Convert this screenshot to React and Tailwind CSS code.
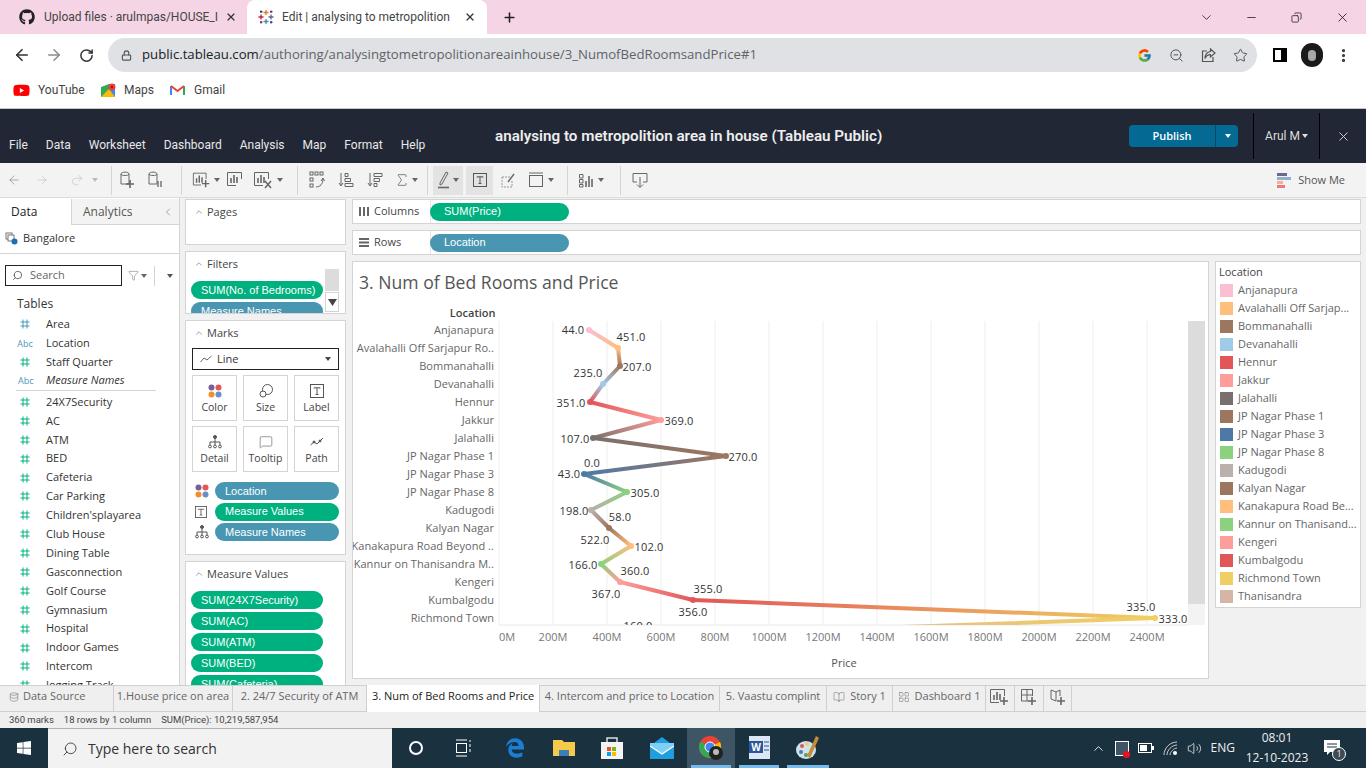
import React from 'react';
import { ArrowLeft, ArrowRight, RotateCw, Lock, ZoomOut, Star, MoreVertical, X, Plus, ChevronDown, ChevronUp, ChevronLeft, Minus, Search, Copy, Volume2, Sigma, Redo2, Filter, Database, MessageSquare, BookOpen, LayoutGrid } from 'lucide-react';
import { FaGithub, FaYoutube, FaWindows, FaEdgeLegacy } from 'react-icons/fa';
import { FcGoogle } from 'react-icons/fc';

const FIELDS = [
  ['#', 'Area', '#4b9ab5'], ['Abc', 'Location', '#4b9ab5'], ['#', 'Staff Quarter', '#00b180'], ['Abc', 'Measure Names', '#4b9ab5'],
  ['#', '24X7Security'], ['#', 'AC'], ['#', 'ATM'], ['#', 'BED'], ['#', 'Cafeteria'], ['#', 'Car Parking'], ['#', "Children'splayarea"],
  ['#', 'Club House'], ['#', 'Dining Table'], ['#', 'Gasconnection'], ['#', 'Golf Course'], ['#', 'Gymnasium'], ['#', 'Hospital'],
  ['#', 'Indoor Games'], ['#', 'Intercom'], ['#', 'Jogging Track'],
];

const POINTS = [
  ['Anjanapura', 589, '#fabfd2'], ['Avalahalli Off Sarjapur Ro..', 618, '#ffbe7d'], ['Bommanahalli', 620, '#9d7660'], ['Devanahalli', 603, '#a0cbe8'],
  ['Hennur', 590, '#e15759'], ['Jakkur', 661, '#ff9d9a'], ['Jalahalli', 593, '#79706e'], ['JP Nagar Phase 1', 726, '#9d7660'],
  ['JP Nagar Phase 3', 584, '#4e79a7'], ['JP Nagar Phase 8', 627, '#8cd17d'], ['Kadugodi', 591, '#bab0ac'], ['Kalyan Nagar', 609, '#9d7660'],
  ['Kanakapura Road Beyond ..', 631, '#ffbe7d'], ['Kannur on Thanisandra M..', 601, '#8cd17d'], ['Kengeri', 620, '#ff9d9a'], ['Kumbalgodu', 693, '#e15759'],
  ['Richmond Town', 1155, '#f1ce63'], ['Thanisandra', 650, '#d7b5a6'],
];

const LEGEND = [
  ['Anjanapura', '#fabfd2'], ['Avalahalli Off Sarjap...', '#ffbe7d'], ['Bommanahalli', '#9d7660'], ['Devanahalli', '#a0cbe8'], ['Hennur', '#e15759'],
  ['Jakkur', '#ff9d9a'], ['Jalahalli', '#79706e'], ['JP Nagar Phase 1', '#9d7660'], ['JP Nagar Phase 3', '#4e79a7'], ['JP Nagar Phase 8', '#8cd17d'],
  ['Kadugodi', '#bab0ac'], ['Kalyan Nagar', '#9d7660'], ['Kanakapura Road Be...', '#ffbe7d'], ['Kannur on Thanisand...', '#8cd17d'], ['Kengeri', '#ff9d9a'],
  ['Kumbalgodu', '#e15759'], ['Richmond Town', '#f1ce63'], ['Thanisandra', '#d7b5a6'],
];

const LABELS = [
  ['44.0', 573, 330], ['451.0', 631, 337], ['207.0', 637, 367], ['235.0', 588, 373], ['351.0', 571, 403], ['369.0', 679, 421], ['107.0', 575, 439],
  ['270.0', 743, 457], ['0.0', 592, 463], ['43.0', 569, 474], ['305.0', 645, 493], ['198.0', 574, 511], ['58.0', 620, 517], ['522.0', 595, 540],
  ['102.0', 649, 547], ['166.0', 583, 565], ['360.0', 635, 571], ['367.0', 606, 594], ['355.0', 708, 589], ['356.0', 693, 612], ['160.0', 638, 626],
  ['335.0', 1141, 607], ['333.0', 1173, 619],
];

const Hash = ({ color = '#00b180' }) => (
  <svg width="10" height="10" viewBox="0 0 10 10" stroke={color} strokeWidth="1" fill="none">
    <path d="M3 0.5V9.5M7 0.5V9.5M0.5 3H9.5M0.5 7H9.5" />
  </svg>
);

const TreeIcon = () => (
  <svg width="14" height="14" viewBox="0 0 14 14" fill="none" stroke="#555" strokeWidth="1">
    <circle cx="7" cy="2" r="1.5" fill="#555" /><path d="M7 4V7M2 10V7H12V10M7 7V10" /><circle cx="2" cy="11.5" r="1.4" /><circle cx="7" cy="11.5" r="1.4" /><circle cx="12" cy="11.5" r="1.4" />
  </svg>
);

const TextBox = ({ size = 14 }) => (
  <svg width={size} height={size} viewBox="0 0 14 14" fill="none" stroke="#555" strokeWidth="1">
    <rect x="0.5" y="0.5" width="13" height="13" /><path d="M4 4.5V3.8H10V4.5M7 3.8V10.5M5.5 10.5H8.5" />
  </svg>
);

const Dots = () => (
  <svg width="14" height="14" viewBox="0 0 14 14">
    <circle cx="3.5" cy="3.5" r="3" fill="#7a5f96" /><circle cx="10.5" cy="3.5" r="3" fill="#e15759" /><circle cx="3.5" cy="10.5" r="3" fill="#f28e2b" /><circle cx="10.5" cy="10.5" r="3" fill="#6b8fc4" />
  </svg>
);

const BarsIcon = ({ plus, cross }) => (
  <svg width="22" height="20" viewBox="0 0 22 20" fill="none" stroke="#666" strokeWidth="1">
    <path d="M1.5 15.5V2.5H15.5V9" /><path d="M1.5 15.5H10" /><path d="M5 13V8M8 13V5M11 13V7" strokeWidth="1.6" />
    {plus && <path d="M15 10V18M11 14H19" strokeWidth="1.6" />}
    {cross && <path d="M12 11L18 18M18 11L12 18" strokeWidth="1.5" />}
  </svg>
);

const DataIcon = ({ mark }) => (
  <svg width="18" height="20" viewBox="0 0 18 20" fill="none" stroke="#666" strokeWidth="1">
    <path d="M2 4C2 1.5 10 1.5 10 4V14H2Z" /><path d="M2 4C2 6 10 6 10 4" />
    {mark === 'plus' ? <path d="M11 10V18M7 14H15" strokeWidth="1.6" /> : <path d="M11 11V17M14 11V17" strokeWidth="1.3" />}
  </svg>
);

const SortIcon = ({ flip }) => (
  <svg width="16" height="18" viewBox="0 0 16 18" fill="none" stroke="#666" strokeWidth="1">
    <path d="M3 2V14M1 12L3 15L5 12" />
    {flip ? <path d="M7 2.5H15V5.5H7ZM7 7.5H12.5V10.5H7ZM7 12.5H10V15.5H7Z" /> : <path d="M7 2.5H10V5.5H7ZM7 7.5H12.5V10.5H7ZM7 12.5H15V15.5H7Z" />}
  </svg>
);

const Caret = ({ color = '#666' }) => (
  <svg width="6" height="4" viewBox="0 0 6 4" className="ml-[2px] shrink-0"><path d="M0 0H6L3 4Z" fill={color} /></svg>
);

const Divider = () => <div className="w-px h-[29px] bg-[#d5d5d5]" />;

const ToolBtn = ({ w, active, children }) => (
  <div style={{ width: w }} className={`h-[29px] flex items-center justify-center shrink-0 ${active ? 'bg-[#e3e3e3]' : ''}`}>{children}</div>
);

const Pill = ({ green, w, className = '', children }) => (
  <div style={{ width: w }} className={`h-[18px] rounded-full shrink-0 pl-[10px] flex items-center font-['Liberation_Sans',sans-serif] text-[11px] leading-none text-white whitespace-nowrap overflow-hidden ${green ? 'bg-[#00b180]' : 'bg-[#4996b2]'} ${className}`}>{children}</div>
);

const CardTitle = ({ children }) => (
  <div className="flex items-center h-[24px] pl-[8px] text-[11px] text-[#444]">
    <ChevronUp size={10} strokeWidth={1.5} className="mr-[3px] text-[#666]" />{children}
  </div>
);

const MarkBtn = ({ label, children }) => (
  <div className="w-[45px] h-[46px] border border-[#d4d4d4] flex flex-col items-center pt-[7px] text-[10.5px] text-[#444]">
    <div className="h-[15px] flex items-center">{children}</div>
    <div className="mt-[4px] leading-none">{label}</div>
  </div>
);

const SheetTab = ({ w, active, children }) => (
  <div style={{ width: w }} className={`h-[27px] pb-[4px] shrink-0 flex items-center justify-center gap-[5px] border-r border-[#cfcfcf] text-[11px] whitespace-nowrap ${active ? 'bg-white text-[#222] font-medium' : 'text-[#666]'}`}>{children}</div>
);

const TaskSlot = ({ w = 48, open, active, children }) => (
  <div style={{ width: w }} className={`relative h-[40px] flex items-center justify-center shrink-0 ${active ? 'bg-[#3d5564]' : ''}`}>
    {children}
    {open && <div className="absolute bottom-0 left-[4px] right-[4px] h-[3px] bg-[#76b9ed]" />}
  </div>
);

function Chart() {
  const y = i => 330 + i * 18;
  return (
    <svg width="857" height="418" viewBox="352 261 857 418" className="block">
      <defs>
        <clipPath id="plot"><rect x="499" y="321" width="689" height="304" /></clipPath>
        {POINTS.slice(1).map((p, i) => (
          <linearGradient key={i} id={`seg${i}`} gradientUnits="userSpaceOnUse" x1={POINTS[i][1]} y1={y(i)} x2={p[1]} y2={y(i + 1)}>
            <stop offset="0" stopColor={POINTS[i][2]} /><stop offset="1" stopColor={p[2]} />
          </linearGradient>
        ))}
      </defs>
      <text x="359" y="289" fontSize="17.6" fill="#555">3. Num of Bed Rooms and Price</text>
      <text x="495.5" y="317" fontSize="11" fontWeight="600" fill="#444" textAnchor="end">Location</text>
      {POINTS.map((p, i) => i < 17 && (
        <text key={p[0]} x="494" y={y(i) + 3.5} fontSize="11" fill="#666" textAnchor="end" letterSpacing="0.05">{p[0]}</text>
      ))}
      {Array.from({ length: 13 }, (_, i) => (
        <g key={i}>
          <line x1={499 + i * 54} x2={499 + i * 54} y1="321" y2="625" stroke="#eeeeee" />
          <text x={i === 0 ? 507 : 499 + i * 54} y="641" fontSize="11" fill="#777" textAnchor="middle">{i * 200}M</text>
        </g>
      ))}
      <line x1="499" x2="1188" y1="625" y2="625" stroke="#e8e8e8" />
      <rect x="1188" y="321" width="17" height="283" fill="#dcdcdc" />
      <rect x="1188" y="604" width="17" height="21" fill="#f3f3f3" />
      <g clipPath="url(#plot)">
        {POINTS.slice(1).map((p, i) => (
          <line key={i} x1={POINTS[i][1]} y1={y(i)} x2={p[1]} y2={y(i + 1)} stroke={`url(#seg${i})`} strokeWidth="4" strokeLinecap="round" />
        ))}
        {POINTS.map((p, i) => <circle key={i} cx={p[1]} cy={y(i)} r="3" fill={p[2]} />)}
        {LABELS.map(l => <text key={l[0] + l[1]} x={l[1]} y={l[2] + 3.5} fontSize="11" fill="#333" textAnchor="middle" letterSpacing="0.2">{l[0]}</text>)}
      </g>
      <text x="844" y="667" fontSize="11" fontWeight="500" fill="#555" textAnchor="middle">Price</text>
    </svg>
  );
}

export default function App() {
  return (
    <div className="w-[1366px] h-[768px] overflow-hidden flex flex-col bg-white font-['Open_Sans',sans-serif]">
      {/* browser tab strip */}
      <div className="h-[34px] shrink-0 bg-[#f5d5e5] flex items-center text-[12px] text-[#444] font-['Roboto',sans-serif]">
        <div className="w-[247px] flex items-center pl-[19px] pr-[10px]">
          <FaGithub size={16} className="text-[#222] shrink-0" />
          <span className="ml-[9px] whitespace-nowrap">Upload files · arulmpas/HOUSE_I</span>
          <X size={12} strokeWidth={2.5} className="ml-auto text-[#333]" />
        </div>
        <div className="w-[240px] h-[34px] bg-white rounded-t-lg flex items-center pl-[11px] pr-[10px]">
          <svg width="16" height="16" viewBox="0 0 16 16" strokeWidth="1.3" fill="none" className="shrink-0">
            <path d="M8 1V6M5.5 3.5H10.5" stroke="#e8762d" /><path d="M8 10V15M5.5 12.5H10.5" stroke="#59879b" /><path d="M3 5.5V10.5M0.5 8H5.5" stroke="#c72037" /><path d="M13 5.5V10.5M10.5 8H15.5" stroke="#5b6591" /><path d="M3 1.5V4M2 2.7H4.5M13 12V14.5M12 13.2H14.5" stroke="#1f447e" /><path d="M13 1.5V4M12 2.7H14.5M3 12V14.5M2 13.2H4.5" stroke="#7b2d5f" />
          </svg>
          <span className="ml-[8px] whitespace-nowrap">Edit | analysing to metropolition</span>
          <X size={12} strokeWidth={2.5} className="ml-auto mr-[1px] text-[#333]" />
        </div>
        <Plus size={15} strokeWidth={2.5} className="ml-[15px] text-[#222]" />
        <div className="ml-auto flex items-center text-[#222]">
          <ChevronDown size={15} strokeWidth={1.3} className="mr-[31px]" />
          <Minus size={13} strokeWidth={1.5} className="mr-[33px]" />
          <Copy size={11} strokeWidth={1.7} className="mr-[33px] -scale-x-100" />
          <X size={15} strokeWidth={1.4} className="mr-[16px]" />
        </div>
      </div>
      {/* address bar */}
      <div className="h-[38px] pt-[4px] shrink-0 flex items-center">
        <ArrowLeft size={18} strokeWidth={2.2} className="ml-[13px] text-[#333]" />
        <ArrowRight size={18} strokeWidth={2} className="ml-[14px] text-[#8c8c8c]" />
        <RotateCw size={15} strokeWidth={2.4} className="ml-[16px] text-[#333]" />
        <div className="ml-[14px] w-[1149px] h-[34px] shrink-0 rounded-full bg-[#dfe1e5] flex items-center pl-[13px]">
          <Lock size={11} strokeWidth={2.5} className="text-[#555]" />
          <span className="ml-[10px] text-[13.2px] text-[#202124] whitespace-nowrap">public.tableau.com<span className="text-[#5f6368]">/authoring/analysingtometropolitionareainhouse/3_NumofBedRoomsandPrice#1</span></span>
          <div className="ml-auto flex items-center mr-[9px] gap-[17px] text-[#555]">
            <FcGoogle size={15} />
            <ZoomOut size={15} strokeWidth={1.6} />
            <svg width="15" height="15" viewBox="0 0 15 15" fill="none" stroke="#555" strokeWidth="1.2"><path d="M6 3H1.5V13.5H12V9" /><path d="M9.5 1L14 5L9.5 9V6.7C7 6.7 5.2 7.7 4 10.5C4 6.7 6 4 9.5 3.5Z" /></svg>
            <Star size={15} strokeWidth={1.6} />
          </div>
        </div>
        <div className="ml-[16px] w-[14px] h-[14px] border-2 border-black border-r-[6px] shrink-0" />
        <div className="ml-[14px] w-[22px] h-[24px] rounded-full bg-[#1a1a1a] flex items-center justify-center shrink-0"><div className="w-[8px] h-[11px] rounded-full bg-[#a8a8a8]" /></div>
        <MoreVertical size={17} strokeWidth={2.5} className="ml-[12px] shrink-0 text-[#333]" />
      </div>
      {/* bookmarks */}
      <div className="h-[36px] shrink-0 border-b border-[#c8c8c8] box-content flex items-center text-[12px] text-[#444] pl-[13px] font-['Roboto',sans-serif]">
        <FaYoutube size={17} className="text-[#f00] shrink-0" />
        <span className="ml-[8px] w-[46px]">YouTube</span>
        <svg width="15" height="15" viewBox="0 0 15 15" className="ml-[17px] shrink-0">
          <path d="M0 4L8 1V14L0 14Z" fill="#34a853" /><path d="M8 1H14V14H8Z" fill="#4285f4" /><path d="M0 14L8 6L14 14Z" fill="#fbbc04" /><circle cx="11" cy="4" r="3.5" fill="#ea4335" /><circle cx="11" cy="4" r="1.2" fill="#a50e0e" />
        </svg>
        <span className="ml-[8px] w-[29px]">Maps</span>
        <svg width="15" height="12" viewBox="0 0 15 12" className="ml-[17px] shrink-0" fill="none">
          <path d="M1 11V2" stroke="#4285f4" strokeWidth="2" /><path d="M14 11V2" stroke="#34a853" strokeWidth="2" /><path d="M1 2L7.5 7L14 2" stroke="#ea4335" strokeWidth="2" />
        </svg>
        <span className="ml-[9px]">Gmail</span>
      </div>
      {/* tableau header */}
      <div className="h-[54px] shrink-0 bg-[#222736] relative flex items-end text-white">
        <div className="flex gap-[18px] pl-[9px] pb-[9px] text-[12px] text-[#e8e8e8] font-['Roboto',sans-serif]">
          {['File', 'Data', 'Worksheet', 'Dashboard', 'Analysis', 'Map', 'Format', 'Help'].map(m => <span key={m}>{m}</span>)}
        </div>
        <div className="absolute left-[495px] top-[18px] text-[15.2px] leading-[18px] font-semibold font-['Roboto',sans-serif] whitespace-nowrap text-[#eee]">analysing to metropolition area in house (Tableau Public)</div>
        <div className="ml-auto mr-[15px] self-stretch flex items-center">
          <div className="w-[109px] h-[22px] rounded-sm bg-[#046a93] flex items-center text-[11px] font-semibold">
            <span className="w-[87px] text-center border-r border-[#02496a] leading-[22px]">Publish</span>
            <span className="flex-1 flex justify-center"><Caret color="#fff" /></span>
          </div>
          <div className="ml-[15px] w-px h-[46px] bg-black" />
          <div className="w-[65px] flex items-center justify-center text-[12px] text-[#ddd] font-['Roboto',sans-serif]">Arul M<Caret color="#ddd" /></div>
          <div className="w-px h-[46px] bg-black" />
          <X size={15} strokeWidth={1.6} className="ml-[16px] text-[#ccc]" />
        </div>
      </div>
      {/* toolbar */}
      <div className="h-[35px] shrink-0 bg-[#f3f3f3] border-b border-[#dcdcdc] flex items-center">
        <ToolBtn w={27}><ArrowLeft size={14} strokeWidth={1} className="text-[#777]" /></ToolBtn>
        <ToolBtn w={30}><ArrowRight size={14} strokeWidth={1} className="text-[#bbb]" /></ToolBtn>
        <ToolBtn w={54}><Redo2 size={14} strokeWidth={1} className="text-[#bbb]" /><span className="ml-[6px]"><Caret color="#bbb" /></span></ToolBtn>
        <Divider />
        <ToolBtn w={32}><DataIcon mark="plus" /></ToolBtn>
        <ToolBtn w={24}><DataIcon /></ToolBtn>
        <div className="w-[13px]" /><Divider />
        <div className="w-[10px]" />
        <ToolBtn w={28}><BarsIcon plus /><Caret /></ToolBtn>
        <ToolBtn w={33}><BarsIcon /></ToolBtn>
        <ToolBtn w={30}><BarsIcon cross /><Caret /></ToolBtn>
        <div className="w-[14px]" /><Divider />
        <div className="w-[5px]" />
        <ToolBtn w={28}><svg width="16" height="18" viewBox="0 0 16 18" fill="none" stroke="#666"><rect x="1" y="1" width="3" height="3" /><rect x="6" y="1" width="3" height="3" /><rect x="11" y="1" width="3" height="3" /><rect x="1" y="7" width="3" height="3" /><rect x="1" y="13" width="3" height="3" /><path d="M7 16C11 16 14 13 14 8M12 10L14 7L15.5 10" /></svg></ToolBtn>
        <ToolBtn w={29}><SortIcon /></ToolBtn>
        <ToolBtn w={29}><SortIcon flip /></ToolBtn>
        <ToolBtn w={33}><Sigma size={16} strokeWidth={1.2} className="text-[#666]" /><Caret /></ToolBtn>
        <div className="w-[5px]" /><Divider />
        <div className="w-[5px]" />
        <ToolBtn w={30} active><svg width="14" height="18" viewBox="0 0 14 18" fill="none" stroke="#666"><path d="M3 12L9 1L11 2L5 13L3 14Z" /><path d="M1 16.5H12" strokeWidth="1.6" /></svg><Caret /></ToolBtn>
        <div className="w-[3px]" />
        <ToolBtn w={27} active><TextBox /></ToolBtn>
        <ToolBtn w={30}><svg width="15" height="15" viewBox="0 0 15 15" fill="none" stroke="#999"><path d="M1 4H9M1 4V14H11V8" strokeDasharray="2 1" /><path d="M7 9L13 1" stroke="#666" strokeWidth="1.4" /></svg></ToolBtn>
        <ToolBtn w={36}><svg width="18" height="16" viewBox="0 0 18 16" fill="none" stroke="#666"><rect x="1.5" y="3.5" width="13" height="11" /><path d="M1 1H15" /></svg><Caret /></ToolBtn>
        <div className="w-[8px]" /><Divider />
        <ToolBtn w={45}><svg width="18" height="16" viewBox="0 0 18 16" fill="none" stroke="#666"><path d="M1.5 2.5H5V6H1.5ZM1.5 7.5H5V11H1.5ZM1.5 12.5H5V15H1.5Z" /><path d="M8 15V9M11 15V4M14 15V7" strokeWidth="1.6" /></svg><Caret /></ToolBtn>
        <div className="w-[7px]" /><Divider />
        <ToolBtn w={37}><svg width="16" height="17" viewBox="0 0 16 17" fill="none" stroke="#666"><path d="M5 10H1V1.5H15V10H11" /><path d="M8 5V15M5 12.5L8 15.5L11 12.5" /></svg></ToolBtn>
        <div className="ml-auto mr-[21px] flex items-center text-[11px] text-[#555]">
          <svg width="14" height="16" viewBox="0 0 14 16" className="mr-[7px]"><rect x="0" y="1" width="10" height="3" fill="#6a6a8e" /><rect x="0" y="5" width="14" height="3" fill="#8fb0cf" /><rect x="0" y="9" width="6" height="3" fill="#f2b38b" /><rect x="0" y="13" width="8" height="3" fill="#e8798a" /></svg>
          Show Me
        </div>
      </div>
      {/* workspace */}
      <div className="flex-1 min-h-0 flex bg-[#f1f1f1]">
        {/* data pane */}
        <div className="w-[180px] shrink-0 bg-white border-r border-[#d4d4d4] flex flex-col overflow-hidden">
          <div className="h-[26px] mt-[1px] shrink-0 flex items-center text-[12px]">
            <div className="w-[72px] h-full flex items-center pl-[11px] text-[#222] border-r border-[#d4d4d4]">Data</div>
            <div className="flex-1 h-full flex items-center pl-[11px] pr-[5px] text-[#555] bg-[#f3f3f3] border-b border-[#d4d4d4]">Analytics<ChevronLeft size={12} strokeWidth={1} className="ml-auto" /></div>
          </div>
          <div className="h-[29px] shrink-0 flex items-center pb-[1px] pl-[5px] border-b border-[#d4d4d4] text-[11px] text-[#333]">
            <svg width="13" height="13" viewBox="0 0 13 13" fill="none" className="mr-[5px]"><rect x="1" y="1" width="6" height="6" stroke="#777" /><rect x="3" y="3" width="6" height="6" stroke="#777" fill="#fff" /><circle cx="9.5" cy="9.5" r="3" fill="#1f6fb0" /></svg>
            Bangalore
          </div>
          <div className="mt-[11px] shrink-0 flex items-center pl-[5px]">
            <div className="w-[117px] h-[21px] border border-[#222] flex items-center pl-[6px] text-[11px] text-[#666]"><Search size={11} strokeWidth={1.5} className="-scale-x-100 mr-[7px] text-[#333]" />Search</div>
            <Filter size={11} strokeWidth={1} className="ml-[6px] text-[#555]" /><Caret />
            <div className="ml-[7px] w-px h-[20px] bg-[#d4d4d4]" />
            <span className="ml-[10px]"><Caret color="#555" /></span>
          </div>
          <div className="ml-[17px] mt-[10px] shrink-0 text-[12px] leading-[16px] text-[#333]">Tables</div>
          <div className="mt-[3px] text-[11px] text-[#333]">
            {FIELDS.map((f, i) => (
              <div key={f[1]} className={`h-[18.9px] flex items-center ${i === 3 ? 'mb-[2px] border-b border-[#d4d4d4] ml-[16px] mr-[23px] pl-[2px] italic' : 'pl-[20px]'}`}>
                <span className={`not-italic flex shrink-0 ${i === 3 ? 'w-[26px] justify-start' : 'w-[10px] mr-[16px] justify-center'}`}>
                  {f[0] === '#' ? <Hash color={f[2]} /> : <span style={{ color: f[2] }} className="text-[9px]">Abc</span>}
                </span>
                <span className={i === 3 ? 'ml-[2px]' : ''}>{f[1]}</span>
              </div>
            ))}
          </div>
        </div>
        {/* cards */}
        <div className="w-[161px] ml-[5px] shrink-0 flex flex-col gap-[6px] pt-[1px] overflow-hidden">
          <div className="h-[46px] shrink-0 bg-white border border-[#d4d4d4]"><CardTitle>Pages</CardTitle></div>
          <div className="h-[63px] shrink-0 bg-white border border-[#d4d4d4] relative overflow-hidden">
            <CardTitle>Filters</CardTitle>
            <Pill green w={132} className="ml-[5px] mt-[5px] mb-[3px]">SUM(No. of Bedrooms)</Pill>
            <Pill w={132} className="ml-[5px]">Measure Names</Pill>
            <div className="absolute left-[139px] top-[17px] w-[14px] h-[22px] bg-[#dcdcdc]" />
            <div className="absolute left-[139px] top-[40px] w-[14px] h-[20px] border border-[#d4d4d4] flex items-center justify-center">
              <svg width="9" height="7" viewBox="0 0 9 7"><path d="M0 0H9L4.5 7Z" fill="#444" /></svg>
            </div>
          </div>
          <div className="h-[235px] shrink-0 bg-white border border-[#d4d4d4] px-[6px]">
            <div className="-mx-[6px]"><CardTitle>Marks</CardTitle></div>
            <div className="h-[22px] mt-[3px] border border-[#222] flex items-center pl-[7px] pr-[7px] text-[11px] text-[#333]">
              <svg width="12" height="8" viewBox="0 0 12 8" fill="none" stroke="#666" className="mr-[5px]"><path d="M0.5 7L4 3L7 5L11.5 1" /></svg>Line<span className="ml-auto"><Caret color="#444" /></span>
            </div>
            <div className="grid grid-cols-3 gap-x-[6px] gap-y-[5px] mt-[5px]">
              <MarkBtn label="Color"><Dots /></MarkBtn>
              <MarkBtn label="Size"><svg width="14" height="14" viewBox="0 0 14 14" fill="none" stroke="#555"><circle cx="8.5" cy="5.5" r="5" /><circle cx="4" cy="10" r="3" fill="#fff" /></svg></MarkBtn>
              <MarkBtn label="Label"><TextBox /></MarkBtn>
              <MarkBtn label="Detail"><TreeIcon /></MarkBtn>
              <MarkBtn label="Tooltip"><MessageSquare size={14} strokeWidth={1} className="text-[#555]" /></MarkBtn>
              <MarkBtn label="Path"><svg width="14" height="12" viewBox="0 0 14 12" fill="none" stroke="#555"><path d="M0.5 9L4 6L7 8L13 2" /><circle cx="4" cy="6" r="1" fill="#555" /><circle cx="10" cy="5" r="1" fill="#555" /></svg></MarkBtn>
            </div>
            <div className="mt-[10px] flex flex-col gap-[2.5px]">
              {[[<Dots key="d" />, 'Location', false], [<TextBox key="t" size={12} />, 'Measure Values', true], [<TreeIcon key="r" />, 'Measure Names', false]].map(r => (
                <div key={r[1]} className="flex items-center">
                  <span className="w-[23px] flex justify-start pl-[3px]">{r[0]}</span>
                  <Pill green={r[2]} w={124}>{r[1]}</Pill>
                </div>
              ))}
            </div>
          </div>
          <div className="flex-1 min-h-0 bg-white border border-[#d4d4d4] border-b-0 overflow-hidden">
            <CardTitle>Measure Values</CardTitle>
            <div className="ml-[5px] mt-[5px] flex flex-col gap-[3px]">
              {['SUM(24X7Security)', 'SUM(AC)', 'SUM(ATM)', 'SUM(BED)', 'SUM(Cafeteria)'].map(m => <Pill key={m} green w={132}>{m}</Pill>)}
            </div>
          </div>
        </div>
        {/* shelves and view */}
        <div className="flex-1 min-w-0 ml-[6px] mr-[5px] pt-[1px] flex flex-col gap-[6px]">
          {[['Columns', 'SUM(Price)', true, <svg key="c" width="10" height="9" viewBox="0 0 10 9" fill="#666"><rect x="0" y="0" width="2" height="9" /><rect x="4" y="0" width="2" height="9" /><rect x="8" y="0" width="2" height="9" /></svg>], ['Rows', 'Location', false, <svg key="r" width="10" height="9" viewBox="0 0 10 9" fill="#666"><rect x="0" y="0" width="10" height="2" /><rect x="0" y="3.5" width="10" height="2" /><rect x="0" y="7" width="10" height="2" /></svg>]].map(s => (
            <div key={s[0]} className="h-[25px] shrink-0 bg-white border border-[#d4d4d4] flex items-center">
              <div className="w-[78px] h-full pl-[6px] flex items-center gap-[5px] text-[11px] text-[#444] border-r border-[#e4e4e4]">{s[3]}{s[0]}</div>
              <Pill green={s[2]} w={139} className="ml-[-1px] pl-[14px]">{s[1]}</Pill>
            </div>
          ))}
          <div className="flex items-start gap-[6px]">
            <div className="w-[857px] h-[418px] shrink-0 bg-white border border-[#d4d4d4] box-border overflow-hidden">
              <div className="-m-px"><Chart /></div>
            </div>
            <div className="w-[146px] h-[347px] shrink-0 bg-white border border-[#d4d4d4] pl-[4px] pt-[3px]">
              <div className="text-[11px] leading-[14px] text-[#444] mb-[2px] -ml-[1px]">Location</div>
              {LEGEND.map(l => (
                <div key={l[0]} className="h-[18px] flex items-center text-[11px] text-[#666] whitespace-nowrap">
                  <span style={{ background: l[1] }} className="w-[13px] h-[13px] mr-[5px] shrink-0" />{l[0]}
                </div>
              ))}
            </div>
          </div>
        </div>
      </div>
      {/* sheet tabs */}
      <div className="h-[27px] shrink-0 bg-[#efefef] border-y border-[#cfcfcf] box-border flex items-center">
        <div className="w-[114px] flex items-center pl-[9px] pb-[4px] gap-[4px] text-[11px] text-[#666] border-r border-[#cfcfcf] h-full"><Database size={10} strokeWidth={1.2} />Data Source</div>
        <SheetTab w={119}>1.House price on area</SheetTab>
        <SheetTab w={134}>2. 24/7 Security of ATM</SheetTab>
        <SheetTab w={173} active>3. Num of Bed Rooms and Price</SheetTab>
        <SheetTab w={180}>4. Intercom and price to Location</SheetTab>
        <SheetTab w={107}>5. Vaastu complint</SheetTab>
        <SheetTab w={66}><BookOpen size={12} strokeWidth={1} />Story 1</SheetTab>
        <SheetTab w={93}><LayoutGrid size={12} strokeWidth={1} />Dashboard 1</SheetTab>
        <SheetTab w={29}><BarsIcon plus /></SheetTab>
        <SheetTab w={29}><svg width="18" height="18" viewBox="0 0 18 18" fill="none" stroke="#666"><path d="M1.5 1.5H12.5V8M1.5 1.5V13H8M7 1.5V13M1.5 7H12.5" /><path d="M12 9V17M8 13H16" strokeWidth="1.6" /></svg></SheetTab>
        <SheetTab w={28}><svg width="18" height="18" viewBox="0 0 18 18" fill="none" stroke="#666"><path d="M2 2L7 4V13L2 11ZM7 4L11 2V8" /><path d="M12 9V17M8 13H16" strokeWidth="1.6" /></svg></SheetTab>
      </div>
      {/* status bar */}
      <div className="h-[16px] shrink-0 bg-[#efefef] flex items-center pl-[9px] gap-[10px] text-[9.5px] text-[#444] font-['Roboto',sans-serif]">
        <span>360 marks</span><span>18 rows by 1 column</span><span>SUM(Price): 10,219,587,954</span>
      </div>
      {/* windows taskbar */}
      <div className="h-[40px] shrink-0 bg-[#1a3140] flex items-center text-white">
        <div className="w-[48px] flex justify-center"><FaWindows size={16} /></div>
        <div className="w-[344px] h-[40px] bg-[#f2f2f2] border-t border-[#b0b0b0] flex items-center pl-[14px] text-[14px] text-[#333] box-border">
          <Search size={16} strokeWidth={1.3} className="-scale-x-100 mr-[10px]" />Type here to search
        </div>
        <TaskSlot><div className="w-[14px] h-[14px] rounded-full border-2 border-white" /></TaskSlot>
        <TaskSlot><svg width="18" height="18" viewBox="0 0 18 18" fill="none" stroke="#fff"><path d="M1 1H12M1 17H12" /><rect x="1.5" y="4.5" width="10" height="9" /><path d="M15 1V3M15 5V8M15 10V13" /></svg></TaskSlot>
        <div className="w-[3px]" />
        <TaskSlot><FaEdgeLegacy size={20} className="text-[#1a7fd4]" /></TaskSlot>
        <TaskSlot w={49}><svg width="22" height="20" viewBox="0 0 22 20"><path d="M0 2H9L11 4H22V18H0Z" fill="#f7c94b" /><rect x="6" y="12" width="10" height="6" fill="#3c7fb8" /></svg></TaskSlot>
        <TaskSlot><svg width="22" height="24" viewBox="0 0 22 24"><rect x="0" y="6" width="22" height="17" fill="#f4f4f4" /><path d="M6 6V2H16V6" fill="none" stroke="#ddd" strokeWidth="1.5" /><rect x="6" y="11" width="4" height="4" fill="#f25022" /><rect x="11" y="11" width="4" height="4" fill="#7fba00" /><rect x="6" y="16" width="4" height="4" fill="#00a4ef" /><rect x="11" y="16" width="4" height="4" fill="#ffb900" /></svg></TaskSlot>
        <TaskSlot w={51}><svg width="24" height="24" viewBox="0 0 24 24"><path d="M12 1L24 10V23H0V10Z" fill="#1f9fe0" /><path d="M0 10L12 18L24 10V7H0Z" fill="#7dd0f5" /><path d="M0 10L12 18L24 10" fill="none" stroke="#fff" strokeWidth="1.2" /></svg></TaskSlot>
        <TaskSlot open active><svg width="26" height="26" viewBox="0 0 26 26"><circle cx="12" cy="12" r="11" fill="#ea4335" /><path d="M12 12L2.5 6.5A11 11 0 0 0 12 23Z" fill="#34a853" /><path d="M12 12L12 23A11 11 0 0 0 22 7Z" fill="#fbbc04" /><circle cx="12" cy="12" r="5" fill="#4285f4" stroke="#fff" /><circle cx="18" cy="18" r="7" fill="#222" /><circle cx="18" cy="17" r="3" fill="#bbb" /></svg></TaskSlot>
        <TaskSlot open><svg width="24" height="26" viewBox="0 0 24 26"><rect x="2" y="1" width="21" height="23" fill="#dbe7f5" /><rect x="2" y="6" width="14" height="12" fill="#2b579a" /><text x="9" y="15.5" fontSize="10" fill="#fff" textAnchor="middle" fontWeight="700">W</text><path d="M17 7H22M17 11H22M17 15H22" stroke="#2b579a" /></svg></TaskSlot>
        <TaskSlot w={50} open><svg width="24" height="26" viewBox="0 0 24 26"><ellipse cx="10" cy="15" rx="10" ry="9" fill="#cfe3ee" /><circle cx="6" cy="11" r="2" fill="#e15759" /><circle cx="11" cy="9" r="2" fill="#f1ce63" /><circle cx="5" cy="17" r="2" fill="#4e79a7" /><circle cx="10" cy="20" r="2" fill="#59a14f" /><path d="M20 1L23 3L14 23L11 21Z" fill="#c98a3a" /></svg></TaskSlot>
        <div className="ml-auto flex items-center h-full text-[12px] text-[#eee]">
          <ChevronUp size={15} strokeWidth={1.5} className="mr-[9px]" />
          <div className="relative mr-[9px]"><div className="w-[14px] h-[15px] border border-white bg-[#3d5564]" /><div className="absolute -right-[1px] -bottom-[2px] w-[7px] h-[7px] rounded-full bg-[#e81123]" /></div>
          <svg width="16" height="10" viewBox="0 0 16 10" className="mr-[9px]" fill="none"><rect x="0.5" y="0.5" width="13" height="9" stroke="#fff" /><rect x="2" y="2" width="7" height="6" fill="#fff" /><rect x="14" y="3" width="2" height="4" fill="#fff" /></svg>
          <svg width="15" height="15" viewBox="0 0 15 15" className="mr-[9px]" fill="none" stroke="#ccc"><path d="M1 14C1 7 7 1 14 1M4 14C4 9 9 4 14 4M7 14C7 11 11 7 14 7" /><circle cx="12" cy="12" r="2" fill="#fff" stroke="none" /></svg>
          <Volume2 size={15} strokeWidth={1.3} className="mr-[9px]" />
          <span className="mr-[9px]">ENG</span>
          <div className="w-[66px] text-center leading-[20px]"><div>08:01</div><div>12-10-2023</div></div>
          <div className="relative ml-[14px] mr-[26px]">
            <svg width="16" height="16" viewBox="0 0 16 16"><path d="M0 0H16V12H6L3 15V12H0Z" fill="#fff" /><path d="M3 4H13M3 7H13" stroke="#1a3140" /></svg>
            <div className="absolute -right-[6px] -bottom-[5px] w-[14px] h-[14px] rounded-full bg-[#3d4a52] border border-white text-[9px] leading-[12px] text-center">1</div>
          </div>
        </div>
      </div>
    </div>
  );
}
